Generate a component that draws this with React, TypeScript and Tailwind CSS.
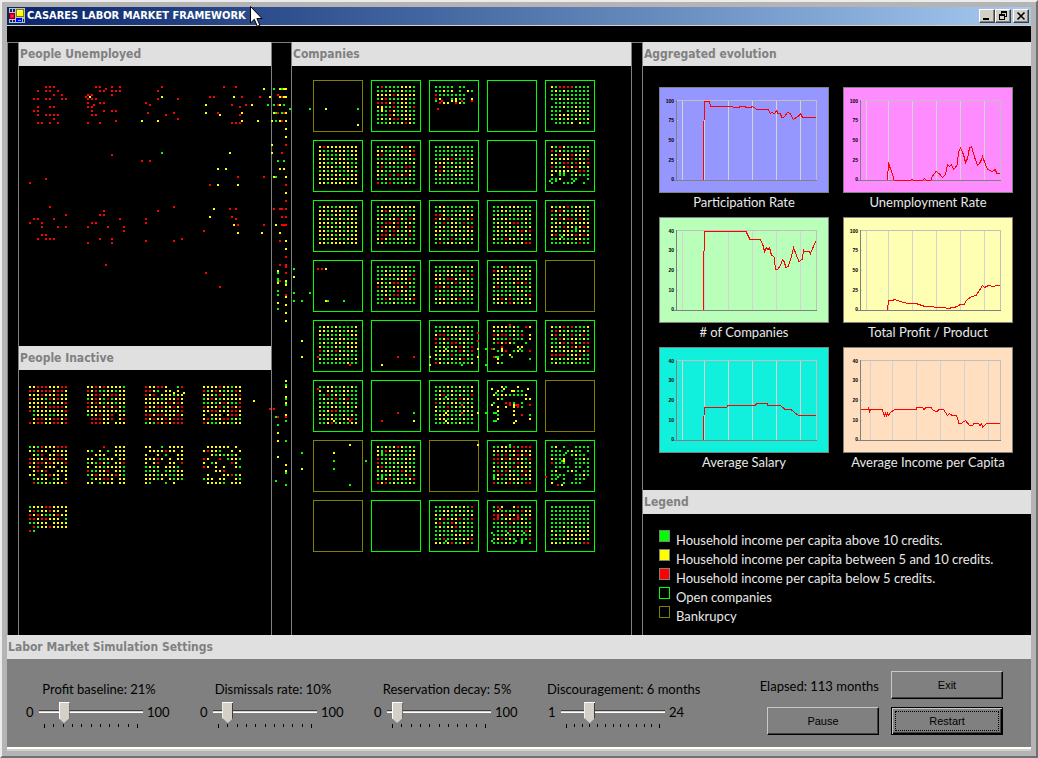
import { useState } from "react";

const FILL: Record<string, string> = { G: "#00ff00", Y: "#ffff00", R: "#ff0000" };

/* One row of letters per line of households; "." is an empty place. */
const INACTIVE: string[] = [
  "YYRRRYYYRR RRYRRRYRRY YYYRYYYRYY RYYYGRYRYY YYYYYGYYYR YYYRYRRRRY RGYYYYYYYR .GYYYGGYYY .YRRYYRRYR RYRRYYRRYR",
  "YYRYRYYYYG RYRGGYYGYY YYRRYYRRYY GYRYGRGYYY RYRYGYYGYY RYYRYRYRYG YYYYYYYYYG GYYRYYR.YY .RRRYYR.YR .RRRYY.YYY",
  "RYYRRY..GR RRYG.YY.Y. RYR.YYYGYY YYYYGYYYRY YYYYYYRYRY RYYRRYYRYR YYGYYYYYYR RRYRRYYYRY RYRYYRYRRR GYGRYRYRRR",
  "YYYYRYYGYY RGYRYGYGRY YYYGRYGYYR GYRYGYYYYY GGYGYRYGGR RYYYRGYRYR YYRRYYYRRY Y.YYY.YRRY YRGYYRRGYG RYGGYYYGYY",
  "GYGRYYYRRR YGRYY.YYYY .YGR.YYRYY RYYYRYYRRY RYRRYRYYYR YYR.YYY.YY .YRYR..YYY YY.GYRYY.Y .GYYY.GY.Y .RGGYGYYYR",
  "....R..YYY YG.Y.G.YYY ..YYY..YYY YY.GGYY.YY GYGRYG.YYR Y.YYGYYYYG RGGYYR.YYG GYRYYYYRYG .GYYRRY.YY YY.GYYY.YY",
  "YY..G.YYYY .YYYYRYY.Y Y..Y.G..YY YYYRY.Y.YY Y.YR..YY.R GYGY.YYYG. GGYG.GYGYY YYYGYYGGYY YYYGY.YGYG YG...G.Y..",
  ".YYYYYY.Y. YRYYG..Y.Y ..YGYGYGY. RY..R.GYYG Y.GY...RY. RY.Y.Y..YG ...YYR.... .Y...YYRGY GYY.YY..YG .YYYYG.YYY",
  "GYYYRRYYYY YRGYYRYY.Y RYRYGGYRYY RRYRRYYY.G GGYYY.YYYY .RGYYRYYYY RG........",
];

type Status = "open" | "bankrupt";
const EMPTY = "";
const COMPANIES: [Status, string][] = [
  ["bankrupt", EMPTY],
  ["open", "GRGGGGYYYG GGGYGGYGGG YYYYRYYYYY GYRGGGYYGG RRRYRGYYGG YYGGRGYYGR GYGRYGGYGG GGGRYGYYYG GYGYRRGYYG GGGYGGYRYG"],
  ["open", "GGGGG.GG.. GGYGY.G.YG RGGGGGGG.. RY..GYGG.Y .RYY.RYG.."],
  ["open", EMPTY],
  ["open", "YGRRRRGGGG GYGYGGGGGG GGGGGGGGGG GGYGYGGGGG .GGGGGGGGG GGGYGGYGGG GGG.GGYYYG GGYYYGGYGG GGYGYGYGGY .GGGGY.YGG"],

  ["open", "YRYYYYYYYY YGGGYYYGYY YYGGGYYGYY YYGYGYYGGY YYGGYYYYGG YYYYGGYYGY GYGYYGGYYG YYYGYYGGYY YGYYYGYYYY YYGYYYYGYY"],
  ["open", "GGYGGGYRYG YYGGGYGGYR YRGYYGYYYR GGGGGGGGYG YYGYYGGYGY GRGGGGGRRG YYGGYGGYYG YGGRGRYRYG GGYGGGGGGG RGGRGGGYGG"],
  ["open", "GGGYGGGGGG GGGGGGGGGG GGGGGYGGGG GGYYRGGRGY YYYGYGGGYY GRYGGYYGYG YRYGYGGGGG GYGGGYYGGG GGGGGGGGGG GGGGYGGGGG"],
  ["open", EMPTY],
  ["open", "YGRYGGGGGG RGYGGGGGYY YYRYYRYYYG YGYYYRGYGR YYGRRGRYYR RGGYRYRYGY YYYYYGYRRG Y.GG.GYGGG GGY..GG..G G..GGG..G."],

  ["open", "GYYGGYYYYG YYGYYYGGYY YYGGYYYGYY YGYYGYGYYG YYYGYYYGYY YGYYGYGYYY YYGGYYGYGY YYYYGYYGYY GYGYYGGYYY YYGYYYYGYY"],
  ["open", "GYYYYYYGYY GYRYGYGYGG GYGGYGYGGY YYGYYRYGRY GGRRYRGYYG GRYYYRGYRG GYRGRYGYYG GRRYRGYGRG YRYGGYGYGG GYGGGGGYGG"],
  ["open", "GYYGGGGYYG GGYGGGGYGG RRYGGYYGYY RYYRYGGGYR YGRGYYGRGG GYYGYYGYYR YYGGYYYGYY YGYGGYGYYG GYGGRGGYGY GRGYYGYGYG"],
  ["open", "GGYGYYYGGG GGYYGGGGYG GYGGYGYYGY YGYYGGGGYG GYGYYRRGYG GYYGYGYGGY GYGYYGYRYR GYGYGGYYGY YGGRYYGYGG GGGYGYGYRR"],
  ["open", "YGYYRGYYGY RYRYGGYYYG GGYGYGYYYG YGRYRRGRYG GYYGYYYYYY YYGRYYGYRY YYGYYG.YYG YRGYYYRYRY GGYGGGYYGG GGGGYGGRGG"],

  ["open", EMPTY],
  ["open", "GGGGGGGYGG GGYGGGYYGG GGYYYGYYGR GYGGGYYYRG YYGYRRGYYG RGYGYYYRGG GYYGGRYYGG GGYGRRGYGY GGRYGGGYYR GGGGYGGGGG"],
  ["open", "GGGGGYGGGY GGGYYGGRGG YYGYYGYYGR YYGRRYGYYG GYYGYRGGYG RRYRGGGYGG GYGGYGGYYG GGGGYGGYGY YYYGYYRGGG GYYGYGGGGG"],
  ["open", "GGYRGGYYGG RYYYGGYGGY YYGGYGGYYG GYGYGYYGYG GYYGGYRYRG YRGYGGYGGY GGGGGGYYGG GYGGYGGGYR YYRYRGYYGY GYYGRYGYGY"],
  ["bankrupt", EMPTY],

  ["open", "GYYGYGGGGY YYGYGYGYYG YGYGGYGGYY GGGYGYYGGG GYGGYYGYYY YGGGYGGYYY RGYGRYGGYG GGYGGGYYGG YGGGYYGGGY GGGGGGGYGG"],
  ["open", EMPTY],
  ["open", "GGGYGYGGYG GGYGGGYYGG YRRGYYGYGG RGYRGGYGYG RGYGRRGYGG YGYGYYRYGR GYYYGGRYGR YGYGRGGGYG GYGGYGYRGG RYGYGGGGGY"],
  ["open", "YYYYGYG.RY YGYGGYGG.. RYRRGYGR.Y YGGGRGGG.Y GRYRYG..G. ..R....Y.. .G.R.GYG.R ..G.Y..... .Y.......G .YG......."],
  ["open", "YGYRGRGGGY GRYGYGGGYG YRGYGRGYRG GGRYGYYGYG GGYRGRYGRR YGYYGRYRYG YYGYYYGYYR RRRRGYYRGG YGYGYGYYGG GYGGGYGGGG"],

  ["open", "GGYYGGYGYG Y.YYGGYYGG GGRGYGYGGG GYGGRGYRGG GGYYGGYYGG YGGYYGGYGY GGYRRGGGG. YYGYGGYGYG GGYYGGYYRG GGYRGYGGYY"],
  ["open", EMPTY],
  ["open", "GGGYGGYGGY GYGGYGGYGY GYRGYGYGGR GYGYGGRYYG RGYGYYGGYG YGGRGYGYGY YGGYGGGYYG GYYYGGYGGY GYYGYGGYGG GGGYGGYGGG"],
  ["open", "..YG..Y... .YG..YGG.. YGYYGGGGY. .YG.....YY G..RRG.G.. .Y.Y.YRG.. .Y...Y.... .G...Y.R.G .Y.......Y ....."],
  ["bankrupt", EMPTY],

  ["bankrupt", EMPTY],
  ["open", "YGYGYRYGYG YGRYYGYGGY YGGGYYGGYY RGGYYGGYYG RGYGGYGYGG YRGGYGYYYG GYYYGGRYGY YGGYGYGYRG GGYRGYGGYR RYRGYGYGYG"],
  ["bankrupt", EMPTY],
  ["open", "GGYYGRGRRR YYYYYYRYYY GRGRGYRYRY RRYRYRYYGR GRGYGGRYGY YGYYYRYYYG GRGRYGGYRY GYRGYYGRYY GYGGYYYGGY RGGYRGYGRR"],
  ["open", "GY.G..GGGG GGG.GYGG.G GGGG.GYGG. YGGY..GGYG RGGG..GGGG .GGGG.GG.G GY..GYG.GG GGGG..GGYG GG.G..GGG. Y..G.GGG.."],

  ["bankrupt", EMPTY],
  ["open", EMPTY],
  ["open", "GGGGYYGYGR GGYYGGYGYG YGYYGYGYGY GYRGYYRGGR YRGGRYGYGG GYGYYRGYGG GGGGYGGGGG GYGGGYYGGY GGRGGYGYYR YYGYRGGYRG"],
  ["open", "GRY..YRGGG GYGGGGGRYY RRYRYYRGYY RRGYYRRYGR GGYGRYGYYG GGGGGGGGGG .GGGRYGGRY GGGYGGYGGG GYRGYG.GGR GGGYGG.G.G"],
  ["open", "GGGGGGGGGG GGGGGGGGGG GGGGGGGGGG GGGGGGGGGG GGGGGYGGGG GGGYGGYGGY YGGGYYGYGY GYGGYYYYYY GGGYYGYYYG YYGYGGYGRR"],
];

/* People looking for a job or on their way between panels. */
const AGENTS: Record<string, string> = {
  R:
    "45,86 49,86 53,86 37,90 45,90 49,90 57,90 53,94 61,94 33,98 37,98 45,98 49,98 61,98 65,98 37,106 49,106 53,106 33,110 37,110 " +
    "37,114 45,114 49,114 53,114 57,114 53,118 37,122 41,122 49,122 57,122 " +
    "95,86 99,86 111,86 119,86 105,88 99,90 103,90 111,90 115,90 119,90 87,94 91,94 111,94 85,96 87,98 91,98 95,98 87,102 99,102 103,102 " +
    "93,104 87,106 91,106 91,110 103,110 111,110 115,110 91,114 95,114 87,122 99,122 115,120 " +
    "161,86 157,90 157,98 177,98 145,102 149,104 147,112 173,112 165,114 177,118 " +
    "223,86 235,86 209,96 213,96 241,96 231,104 245,104 239,106 217,112 239,114 231,122 235,122 239,122 259,96 " +
    "111,154 141,160 149,160 237,176 263,176 45,178 29,182 209,184 " +
    "49,206 173,206 229,208 235,208 103,210 157,210 65,214 99,214 103,214 231,216 33,218 37,218 53,218 119,218 145,218 235,218 " +
    "29,222 41,222 91,222 95,222 145,222 237,224 263,224 41,226 57,226 65,226 87,226 107,226 123,226 123,230 203,230 41,234 45,234 " +
    "37,238 45,238 49,238 53,238 99,238 111,238 181,238 145,240 173,240 87,242 111,242 105,264 205,272 219,286 " +
    "277,94 281,96 277,104 277,112 283,112 281,120 285,144 281,152 285,184 285,200 273,208 279,208 281,208 285,208 281,216 285,216 " +
    "281,224 283,224 285,224 279,240 285,256 279,264 285,264 285,266 285,272 279,280 285,294 269,408 273,408 277,416 285,416 " +
    "317,268 321,268 437,108 441,100 461,100 471,100 317,356 349,364 397,356 413,356 317,388 381,420 397,412 461,404 461,412 349,420 " +
    "477,332 477,340 509,324 491,348 493,356 509,404 515,404 517,404 529,404 545,476 557,484 497,516 497,518 517,516 517,518 499,508",
  Y:
    "89,96 161,96 141,120 157,120 233,96 205,104 251,104 205,112 241,112 219,114 241,120 257,120 263,88 269,96 " +
    "229,152 217,168 225,168 217,184 237,184 213,208 209,216 233,224 237,232 261,232 " +
    "279,88 283,88 285,88 279,96 283,96 285,96 279,104 273,112 285,112 271,120 279,120 285,120 285,128 285,136 271,144 271,152 " +
    "279,168 283,168 273,176 285,176 285,192 275,224 279,232 285,240 285,248 277,270 285,280 277,282 285,284 285,296 277,302 285,304 285,312 285,320 " +
    "293,276 253,400 173,392 183,392 285,380 285,386 285,396 285,402 285,414 277,432 277,440 277,456 285,464 285,470 " +
    "325,108 357,124 325,268 325,300 451,100 455,100 381,108 301,340 301,356 319,358 381,364 429,356 429,364 413,420 445,412 445,420 333,420 " +
    "349,444 333,452 301,468 477,348 477,356 477,412 477,444 501,348 501,350 517,346 521,346 497,362 491,388 503,388 527,388 511,390 513,404 491,404 515,420 513,422 563,460 561,484",
  G:
    "161,152 267,104 273,88 281,88 273,104 283,104 289,108 275,112 281,112 275,120 277,160 283,160 275,176 277,272 277,278 277,280 285,282 " +
    "277,290 277,294 277,308 293,268 293,292 293,300 285,384 285,398 285,404 275,416 277,424 285,420 285,440 285,472 275,480 285,484 " +
    "309,108 357,108 435,100 309,292 301,300 327,300 343,300 559,172 563,172 549,180 555,180 573,180 587,178 575,228 575,230 561,236 " +
    "445,348 461,364 445,396 413,412 485,348 485,364 485,412 301,452 333,460 333,468 349,484 365,460 381,450 381,452 381,474 381,476 445,540 " +
    "493,348 519,348 511,356 495,356 497,356 495,392 493,412 495,412 493,420 495,420 509,444 509,466 493,474 493,476 565,452 561,460 557,476 " +
    "491,532 507,532 523,532 491,540 515,540 521,540",
};

function Dot({ x, y, tone }: { x: number; y: number; tone: string }) {
  return <rect x={x} y={y} width={2} height={2} fill={FILL[tone]} />;
}

function Crowd({ rows }: { rows: string }) {
  return (
    <svg width="38" height="38" viewBox="0 0 38 38" shapeRendering="crispEdges" aria-hidden="true">
      {rows.split(" ").map((row, r) =>
        row.split("").map((tone, c) => (tone in FILL ? <Dot key={`${r}-${c}`} x={c * 4} y={r * 4} tone={tone} /> : null)),
      )}
    </svg>
  );
}

function MovingAgents() {
  return (
    <svg className="pointer-events-none absolute left-0 top-0" width="625" height="593" viewBox="7 42 625 593" shapeRendering="crispEdges" aria-hidden="true">
      {Object.entries(AGENTS).map(([tone, list]) =>
        list.split(" ").map((point) => {
          const [x, y] = point.split(",").map(Number);
          return <Dot key={tone + point} x={x} y={y} tone={tone} />;
        }),
      )}
    </svg>
  );
}

function PanelHeader({ children }: { children: string }) {
  return (
    <h2 className="h-6 shrink-0 bg-[#e0e0e0] pl-px font-['DejaVu_Sans_Condensed','DejaVu_Sans',sans-serif] text-[12px] leading-6 font-bold text-[#808080]">
      {children}
    </h2>
  );
}

type ChartProps = { title: string; color: string; labels: number[]; grid: number[]; points: string };

const GRID = [23, 45, 69, 93, 117, 141];
const PERCENT = [100, 75, 50, 25, 0];
const FORTY = [40, 30, 20, 10, 0];

const CHARTS: ChartProps[] = [
  {
    title: "Participation Rate",
    color: "#9696ff",
    labels: PERCENT,
    grid: GRID,
    points:
      "44.5,93 44.5,54 45.5,14.5 50.5,14.5 51.5,19.5 73,19.5 75,20.5 80,20.5 81,19.5 86,19.5 87,20.5 92,20.5 93,19.5 95,20.5 98,22.5 109,22.5 111.5,26.5 113,25.5 115.5,26.5 117.5,23.5 119,26.5 121.5,26.5 122.5,30.5 125,30 128.5,25.5 131,26.5 134.5,32.5 137,30.5 139.5,29 141.5,26.5 143.5,30.5 157,30.5",
  },
  {
    title: "Unemployment Rate",
    color: "#ff8cff",
    labels: PERCENT,
    grid: GRID,
    points:
      "44.5,93 45.5,75.5 47,80.5 49.5,87 51,93 68,93 69,92 70,93 80,93 81.5,91.5 83,93 88,93 89.5,89 93,84.5 96,86.5 99.5,90.5 102.5,87.5 104.5,78 106.5,79.5 108.5,77.5 110.5,82.5 114,78.5 115.5,65.5 117.5,61 120.5,67.5 122.5,75.5 124.5,71.5 126.5,61 128.5,59.5 131.5,70 134.5,78.5 137.5,75 139.5,69.5 142.5,77.5 144.5,82.5 149.5,84.5 152,82.5 154,86.5 157,86.5",
  },
  {
    title: "# of Companies",
    color: "#b9ffb9",
    labels: FORTY,
    grid: GRID,
    points:
      "44.5,93 44.5,54 45.5,14.5 87,14.5 89.5,19.5 91,22.5 101,22.5 103.5,26.5 105.5,34.5 107.5,30.5 109,32.5 110.5,30.5 112.5,38.5 115,39.5 116.5,52 118.5,52.5 121.5,48.5 123.5,42.5 125,44.5 127,50.5 129,49.5 132,41.5 134.5,30.5 137.5,38.5 140,44.5 143.5,42 144.5,33 145.5,34.5 150.5,34.5 151.5,36.5 156.5,24.5",
  },
  {
    title: "Total Profit / Product",
    color: "#ffffb4",
    labels: PERCENT,
    grid: GRID,
    points:
      "44.5,93 45.5,83.5 49.5,83.5 51.5,82.5 57,84.5 65.5,86.5 73,86.5 82,89.5 89.5,89.5 92,90.5 102,90.5 104.5,91.5 110.5,90.5 114.5,89.5 117,87.5 121,87.5 123.5,83.5 127,80.5 133.5,78 137,72.5 139.5,68.5 141.5,70.5 145.5,68.5 150.5,69.5 153,68.5 157,68.5",
  },
  {
    title: "Average Salary",
    color: "#10f0dc",
    labels: FORTY,
    grid: GRID,
    points:
      "44.5,93 44.5,77 45.5,60.5 67.5,60.5 69,58.5 96.5,58.5 97.5,56.5 108,56.5 109,58.5 121.5,58.5 126,62.5 132,62.5 136,66 139.5,68.5 157,68.5",
  },
  {
    title: "Average Income per Capita",
    color: "#ffdfc0",
    labels: FORTY,
    grid: [27, 49, 73, 97, 121, 145],
    points:
      "18,62.5 25,62.5 25.5,60.5 26.5,64.5 27.5,62.5 39,62.5 40.5,66.5 41.5,68.5 42.5,66.5 43.5,68.5 44.5,66.5 45.5,68.5 47.5,65.5 51.5,62.5 73,62.5 74,60.5 79.5,60.5 81,62.5 83,60.5 88,60.5 90.5,63.5 94,64.5 96,62.5 100.5,62.5 104.5,68.5 106.5,66.5 109,68.5 113.5,68.5 116,76.5 118,76.5 122.5,73.5 126.5,78.5 129.5,78.5 131,76.5 135.5,76.5 137,78.5 138.5,76.5 139.5,80 142,78 143.5,76.5 157,76.5",
  },
];

function Chart({ title, color, labels, grid, points }: ChartProps) {
  return (
    <figure className="w-[170px]">
      <svg width="170" height="106" viewBox="0 0 170 106" shapeRendering="crispEdges" className="block" role="img" aria-label={title}>
        <rect x="0.5" y="0.5" width="169" height="105" fill={color} stroke="#808080" />
        <path d={grid.map((x) => `M${x}.5 13V93`).join("")} stroke="#d3d3d3" fill="none" />
        <path d="M17 13.5H158M157.5 13V93M17 33.5h2M17 53.5h2M17 73.5h2" stroke="#c0c0c0" fill="none" />
        <path d="M17.5 13V93M15 93.5H158" stroke="#808080" fill="none" />
        {labels.map((label, i) => (
          <text key={label} x="15" y={i ? 15 + i * 20 - (i > 3 ? 1 : 0) : 16} fontSize="5" fontWeight="700" textAnchor="end" className="font-['Liberation_Sans',sans-serif]">
            {label}
          </text>
        ))}
        <polyline points={points} fill="none" stroke="#ff0000" />
      </svg>
      <figcaption className="text-center leading-[18px] whitespace-nowrap">{title}</figcaption>
    </figure>
  );
}

const LEGEND = [
  { swatch: "border-[#808080] bg-[#00ff00]", text: "Household income per capita above 10 credits." },
  { swatch: "border-[#808080] bg-[#ffff00]", text: "Household income per capita between 5 and 10 credits." },
  { swatch: "border-[#808080] bg-[#ff0000]", text: "Household income per capita below 5 credits." },
  { swatch: "border-[#00ff00]", text: "Open companies" },
  { swatch: "border-[#808000]", text: "Bankrupcy" },
];

type SettingProps = { id: string; label: string; unit: string; start: number; min: number; max: number; low: string; ticks: number };

const SETTINGS: SettingProps[] = [
  { id: "profit", label: "Profit baseline", unit: "%", start: 21, min: 0, max: 100, low: "0", ticks: 11 },
  { id: "dismissals", label: "Dismissals rate", unit: "%", start: 10, min: 0, max: 100, low: "0", ticks: 11 },
  { id: "reservation", label: "Reservation decay", unit: "%", start: 5, min: 0, max: 100, low: "0", ticks: 11 },
  { id: "discouragement", label: "Discouragement", unit: " months", start: 6, min: 0, max: 24, low: "1", ticks: 13 },
];

function Setting({ id, label, unit, start, min, max, low, ticks }: SettingProps) {
  const [value, setValue] = useState(start);
  return (
    <div className="w-[174px]">
      <label htmlFor={id} className="block w-[148px] text-center leading-[22px] whitespace-nowrap">
        {label}: {value}
        {unit}
      </label>
      <div className="mt-px flex">
        <span className="w-[14px] pl-px leading-[22px]">{low}</span>
        <div className="w-[104px]">
          <input
            id={id}
            type="range"
            min={min}
            max={max}
            value={value}
            onChange={(e) => setValue(Number(e.target.value))}
            className="block h-[21px] w-full appearance-none bg-transparent [&::-webkit-slider-runnable-track]:h-[3px] [&::-webkit-slider-runnable-track]:border-y [&::-webkit-slider-runnable-track]:border-t-[#404040] [&::-webkit-slider-runnable-track]:border-b-white [&::-webkit-slider-runnable-track]:bg-[#d4d0c8] [&::-webkit-slider-thumb]:-mt-[9px] [&::-webkit-slider-thumb]:h-[21px] [&::-webkit-slider-thumb]:w-[11px] [&::-webkit-slider-thumb]:appearance-none [&::-webkit-slider-thumb]:bg-[#d4d0c8] [&::-webkit-slider-thumb]:shadow-[inset_1px_1px_#fff,inset_-1px_0_#404040] [&::-webkit-slider-thumb]:[clip-path:polygon(0_0,100%_0,100%_76%,50%_100%,0_76%)]"
          />
          <svg width="104" height="6" viewBox="0 0 104 6" shapeRendering="crispEdges" aria-hidden="true">
            {Array.from({ length: ticks }, (_, i) => (
              <rect key={i} x={Math.round(5 + (i * 93) / (ticks - 1))} y="2" width="1" height={i === 0 || i === ticks - 1 ? 4 : 3} />
            ))}
          </svg>
        </div>
        <span className="pl-1 leading-[22px]">{max}</span>
      </div>
    </div>
  );
}

const BUTTON = "h-7 w-28 border bg-[#808080] font-['Liberation_Sans',sans-serif] text-[11px]";
const RAISED = "border-t-[#c8c8c8] border-l-[#c8c8c8] border-r-black border-b-black shadow-[inset_-1px_-1px_#404040]";
const FOCUSED = "border-black p-[3px] shadow-[inset_1px_1px_#c8c8c8,inset_-1px_-1px_#000,inset_-2px_-2px_#404040]";

const CAPTION_BUTTON =
  "flex h-[14px] w-4 items-center justify-center border border-t-white border-l-white border-r-[#404040] border-b-[#404040] bg-[#d4d0c8] shadow-[inset_-1px_-1px_#808080]";

function AppIcon() {
  return (
    <svg width="16" height="16" viewBox="0 0 16 16" shapeRendering="crispEdges" aria-hidden="true">
      <path d="M0 0h16v15H0z" fill="#c0c0c0" />
      <path d="M1 1h2v3H1zM4 1h2v3H4zM1 12h2v2H1zM4 12h2v2H4zM14 11h1v3h-1z" fill="#0a246a" />
      <path d="M0 5h6v6H0z" fill="#800000" />
      <path d="M1 6h4v4H1z" fill="#ff0000" />
      <path d="M2 7h2v2H2z" fill="#ff00ff" />
      <path d="M7 1h8v8H7z" fill="#808000" />
      <path d="M8 2h6v6H8z" fill="#ffff00" />
      <path d="M9 2h4v1H9zM8 3h1v3H8z" fill="#ffffc0" />
      <path d="M7 10h6v4H7z" fill="#0000ff" />
      <path d="M9 12h3v1H9z" fill="#00ffff" />
    </svg>
  );
}

export default function App() {
  const [running, setRunning] = useState(true);
  return (
    <div className="flex min-h-screen flex-col border-2 border-t-[#ececec] border-l-[#ececec] border-r-[#707070] border-b-[#707070] bg-[#b4b4b4] p-[5px] font-['Lato','Roboto',sans-serif] text-[13px]">
      <header className="flex h-[18px] items-center bg-linear-to-r from-[#0a246a] to-[#a6caf0] px-0.5">
        <AppIcon />
        <h1 className="flex-1 pl-0.5 font-['DejaVu_Sans_Condensed','DejaVu_Sans',sans-serif] text-[11px] font-bold whitespace-nowrap text-white">CASARES LABOR MARKET FRAMEWORK</h1>
        <button type="button" aria-label="Minimize" className={CAPTION_BUTTON}>
          <svg width="12" height="10" viewBox="0 0 12 10" shapeRendering="crispEdges"><path d="M2 7h6v2H2z" /></svg>
        </button>
        <button type="button" aria-label="Restore" className={CAPTION_BUTTON}>
          <svg width="12" height="10" viewBox="0 0 12 10" shapeRendering="crispEdges">
            <path d="M4 0h6v6H8V5h1V2H5v1H4zM2 3h6v6H2zM3 5v3h4V5z" fillRule="evenodd" />
          </svg>
        </button>
        <button type="button" aria-label="Close" className={`${CAPTION_BUTTON} ml-0.5`}>
          <svg width="12" height="10" viewBox="0 0 12 10"><path d="M2.5 1.5l7 7M9.5 1.5l-7 7" stroke="#000" strokeWidth="1.6" /></svg>
        </button>
      </header>
      <div className="h-[17px] border-t border-[#d4d0c8] bg-black" />

      <main className="relative flex flex-1 bg-black text-[#e8e8e8]">
        <div className="w-[11px] border-t border-l border-[#808080]" />
        <div className="flex w-[254px] shrink-0 flex-col border-x border-[#808080]">
          <section className="h-[304px]">
            <PanelHeader>People Unemployed</PanelHeader>
          </section>
          <section>
            <PanelHeader>People Inactive</PanelHeader>
            <div className="grid grid-cols-[repeat(4,38px)] gap-x-5 gap-y-[22px] pt-4 pl-[10px]">
              {INACTIVE.map((rows, i) => (
                <Crowd key={i} rows={rows} />
              ))}
            </div>
          </section>
        </div>
        <div className="w-[19px] border-t border-[#808080]" />
        <section className="w-[341px] shrink-0 border-x border-[#808080]">
          <PanelHeader>Companies</PanelHeader>
          <div className="grid grid-cols-[repeat(5,50px)] gap-2 pt-[14px] pl-[21px]">
            {COMPANIES.map(([status, rows], i) => (
              <div key={i} className={`h-[52px] border p-[5px] ${status === "open" ? "border-[#00ff00]" : "border-[#808000]"}`}>
                <Crowd rows={rows} />
              </div>
            ))}
          </div>
        </section>
        <div className="w-[10px] border-t border-[#808080]" />
        <div className="flex flex-1 flex-col border-l border-[#808080]">
          <section className="h-[448px]">
            <PanelHeader>Aggregated evolution</PanelHeader>
            <div className="grid grid-cols-[170px_170px] gap-x-[14px] gap-y-[6px] pt-[21px] pl-4">
              {CHARTS.map((chart) => (
                <Chart key={chart.title} {...chart} />
              ))}
            </div>
          </section>
          <section className="flex-1">
            <PanelHeader>Legend</PanelHeader>
            <ul className="pt-4 pl-4">
              {LEGEND.map(({ swatch, text }) => (
                <li key={text} className="flex h-[19px] gap-[6px]">
                  <span className={`h-3 w-[11px] border ${swatch}`} />
                  <span className="leading-5 whitespace-nowrap">{text}</span>
                </li>
              ))}
            </ul>
          </section>
        </div>
        <MovingAgents />
      </main>

      <section>
        <PanelHeader>Labor Market Simulation Settings</PanelHeader>
        <div className="flex h-[88px] items-start bg-[#808080] pl-[18px] text-black">
          <div className="flex pt-[19px]">
            {SETTINGS.map((setting) => (
              <Setting key={setting.id} {...setting} />
            ))}
          </div>
          <div className="ml-auto grid grid-cols-[112px_112px] gap-x-3 gap-y-2 pt-3 pr-7">
            <p className="justify-self-end leading-[30px] whitespace-nowrap h-7">Elapsed: 113 months</p>
            <button type="button" className={`${BUTTON} ${RAISED}`}>Exit</button>
            <button type="button" className={`${BUTTON} ${RAISED}`} onClick={() => setRunning(!running)}>{running ? "Pause" : "Resume"}</button>
            <button type="button" className={`${BUTTON} ${FOCUSED}`}>
              <span className="flex h-full items-center justify-center border border-dotted border-black">Restart</span>
            </button>
          </div>
        </div>
      </section>
      <div className="h-1 border-t-2 border-white bg-[#d4d0c8]" />

      <svg className="pointer-events-none absolute top-[6px] left-[250px]" width="13" height="22" viewBox="0 0 13 22" aria-hidden="true">
        <path d="M.5.5v16.5l3.8-3.7 3 7 2.6-1.1-3-6.7h5.1z" fill="#fff" stroke="#000" />
      </svg>
    </div>
  );
}
